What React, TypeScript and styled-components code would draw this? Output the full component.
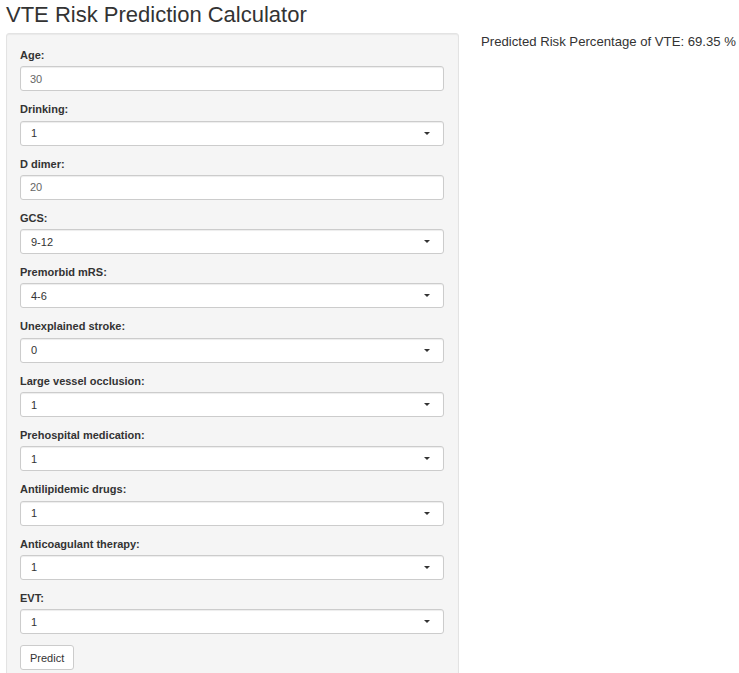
import styled, { createGlobalStyle } from 'styled-components';

const GlobalStyle = createGlobalStyle`
  body {
    margin: 0;
    background: #fff;
    font-family: "Liberation Sans", Arial, Helvetica, sans-serif;
    color: #333;
  }
`;

type Field = { label: string, value: string, kind: 'numeric' | 'select' };

const fields: Field[] = [
  { label: 'Age:', value: '30', kind: 'numeric' },
  { label: 'Drinking:', value: '1', kind: 'select' },
  { label: 'D dimer:', value: '20', kind: 'numeric' },
  { label: 'GCS:', value: '9-12', kind: 'select' },
  { label: 'Premorbid mRS:', value: '4-6', kind: 'select' },
  { label: 'Unexplained stroke:', value: '0', kind: 'select' },
  { label: 'Large vessel occlusion:', value: '1', kind: 'select' },
  { label: 'Prehospital medication:', value: '1', kind: 'select' },
  { label: 'Antilipidemic drugs:', value: '1', kind: 'select' },
  { label: 'Anticoagulant therapy:', value: '1', kind: 'select' },
  { label: 'EVT:', value: '1', kind: 'select' },
];

const App = () => {
  return (
    <Page>
      <GlobalStyle />
      <Title>VTE Risk Prediction Calculator</Title>
      <Layout>
        <Sidebar>
          {fields.map((f) => (
            <FormGroup key={f.label}>
              <Label>{f.label}</Label>
              {f.kind === 'numeric' ? (
                <NumberInput type="text" defaultValue={f.value} />
              ) : (
                <SelectBox>
                  <span>{f.value}</span>
                  <Caret />
                </SelectBox>
              )}
            </FormGroup>
          ))}
          <PredictButton type="button">Predict</PredictButton>
        </Sidebar>
        <Main>
          <Result>Predicted Risk Percentage of VTE: 69.35 %</Result>
        </Main>
      </Layout>
    </Page>
  );
};

const Page = styled.div`
  padding: 3px 0 0 6px;
`;

const Title = styled.h2`
  margin: 0 0 6px 0;
  font-size: 22px;
  font-weight: 400;
  line-height: 24px;
  color: #333;
`;

const Layout = styled.div`
  display: grid;
  grid-template-columns: 453px 1fr;
  column-gap: 22px;
  align-items: start;
`;

const Sidebar = styled.div`
  box-sizing: border-box;
  background: #f5f5f5;
  border: 1px solid #e3e3e3;
  border-radius: 3px;
  box-shadow: inset 0 1px 1px rgba(0, 0, 0, 0.05);
  padding: 14px 14px 20px 13px;
  min-height: 660px;
`;

const FormGroup = styled.div`
  display: flex;
  flex-direction: column;
  margin-bottom: 11px;
`;

const Label = styled.label`
  font-size: 11px;
  font-weight: 700;
  line-height: 15.7px;
  margin-bottom: 2.6px;
  color: #333;
`;

const NumberInput = styled.input`
  box-sizing: border-box;
  height: 25px;
  width: 100%;
  padding: 0 9px;
  font-family: inherit;
  font-size: 11px;
  color: #666;
  background: #fff;
  border: 1px solid #ccc;
  border-radius: 3px;
  box-shadow: inset 0 1px 1px rgba(0, 0, 0, 0.075);
  outline: none;
`;

const SelectBox = styled.div`
  box-sizing: border-box;
  height: 25px;
  display: flex;
  align-items: center;
  justify-content: space-between;
  padding: 0 13px 0 10px;
  font-size: 11px;
  color: #333;
  background: #fff;
  border: 1px solid #ccc;
  border-radius: 3px;
  box-shadow: inset 0 1px 1px rgba(0, 0, 0, 0.075);
`;

const Caret = styled.span`
  width: 0;
  height: 0;
  border-style: solid;
  border-width: 3.5px 3.5px 0 3.5px;
  border-color: #333 transparent transparent transparent;
`;

const PredictButton = styled.button`
  height: 25px;
  padding: 0 9px;
  font-family: inherit;
  font-size: 11px;
  color: #333;
  background: #fff;
  border: 1px solid #ccc;
  border-radius: 3px;
  cursor: pointer;
`;

const Main = styled.div`
  padding-top: 0;
`;

const Result = styled.div`
  font-size: 13.15px;
  line-height: 18.6px;
  color: #333;
`;

export default App;
